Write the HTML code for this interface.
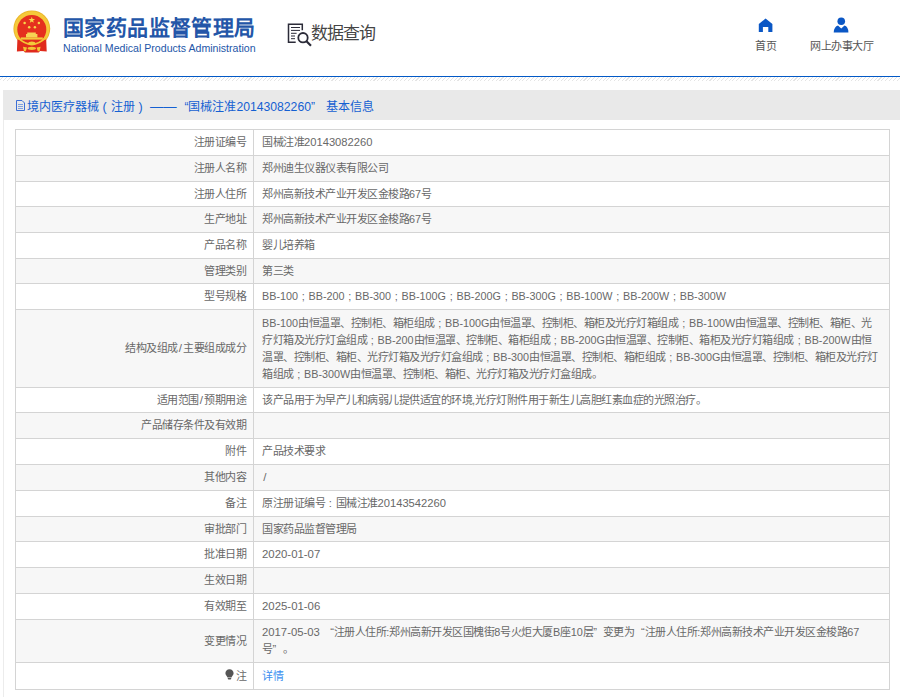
<!DOCTYPE html><html lang="zh-CN"><head><meta charset="utf-8"><title>NMPA</title><style>
*{margin:0;padding:0;box-sizing:border-box}
html,body{width:900px;height:697px;overflow:hidden;background:#fff}
body{position:relative;font-family:"Liberation Sans",sans-serif;color:#686868}
.a{position:absolute;white-space:nowrap}
.t{font-size:11px;letter-spacing:-0.5px;line-height:17.2px}
.L{letter-spacing:0}
.sc{display:inline-block;text-align:center;letter-spacing:0}
.q{letter-spacing:0}
</style></head><body>
<svg class="a" style="left:0;top:0" width="60" height="60" viewBox="0 0 60 60">
<circle cx="31.8" cy="28.8" r="18.4" fill="#eab52a"/>
<circle cx="31.8" cy="28.8" r="17.5" fill="#f5c93a"/>
<circle cx="31.8" cy="29.6" r="14.5" fill="#e5301e"/>
<path d="M27.2 32.4 H35.8 V34 H37.4 V37.5 H26 V34 H27.2Z" fill="#f6d454"/>
<path d="M20.8 37.4 H42.8 V39.6 H20.8Z" fill="#f3c93c"/>
<path d="M17.4 39.5 L16.9 51.5 L23.5 51 L25 52.4 L38.6 52.4 L40.1 51 L46.7 51.5 L46.2 39.5 Q31.8 42 17.4 39.5Z" fill="#e02a1c"/>
<path d="M17.2 37.2 Q31.8 51.5 46.4 37.2" fill="none" stroke="#f3c534" stroke-width="1.7"/>
<ellipse cx="31.8" cy="43.4" rx="3.6" ry="1.9" fill="#f3c93a"/>
<ellipse cx="31.8" cy="48.3" rx="4.2" ry="1.6" fill="#f3c534"/>
<path d="M23 46.8 L27 47.6 L25.8 51.2 L24 51.2Z M40.6 46.8 L36.6 47.6 L37.8 51.2 L39.6 51.2Z" fill="#f3c534"/>
<polygon points="31.8,16.8 32.6,19.1 35.1,19.1 33.1,20.5 33.8,22.8 31.8,21.4 29.8,22.8 30.5,20.5 28.5,19.1 31,19.1" fill="#f8d84a"/>
<circle cx="24.6" cy="23" r="1.25" fill="#f8d84a"/>
<circle cx="38.9" cy="23" r="1.25" fill="#f8d84a"/>
<circle cx="29.2" cy="27.2" r="1.25" fill="#f8d84a"/>
<circle cx="34.9" cy="27.2" r="1.25" fill="#f8d84a"/>
</svg>
<div class="a" style="left:63px;top:13.5px;font-size:21px;letter-spacing:0.4px;line-height:28px;font-weight:bold;color:#2356a8">国家药品监督管理局</div>
<div class="a" style="left:63px;top:40.7px;font-size:10.6px;line-height:14px;color:#2356a8">National Medical Products Administration</div>
<svg class="a" style="left:282px;top:16px" width="34" height="34" viewBox="0 0 34 34">
<g fill="none" stroke="#2b2b38" stroke-width="1.5">
<path d="M13.7 26.3 H6.5 V8.2 H20.3 V14.2"/>
<circle cx="21" cy="21.7" r="4.7" stroke-width="1.8"/>
<path d="M24.5 25.2 L29 29.7" stroke-width="2.2"/>
</g>
<g stroke="#2b2b38" stroke-width="1">
<path d="M9 11.5H18M9 14.4H18M9 17.3H14.6M9 20H13M9 22.7H13"/>
</g>
</svg>
<div class="a" style="left:310.5px;top:22.5px;font-size:17px;letter-spacing:-0.7px;line-height:22px;color:#454545">数据查询</div>
<svg class="a" style="left:750px;top:12px" width="40" height="24" viewBox="0 0 40 24">
<path d="M8.8 12 L15.6 6.6 L22.4 12 V19.9 H18.3 V15.1 H12.9 V19.9 H8.8 Z" fill="#0b57c5"/>
</svg>
<div class="a t" style="left:755px;top:37.5px;color:#555">首页</div>
<svg class="a" style="left:825px;top:12px" width="32" height="24" viewBox="0 0 32 24">
<circle cx="16.25" cy="9.3" r="3.8" fill="#0b57c5"/>
<path d="M8.7 20.5 Q9.2 14.4 13 13.6 L16.25 16.6 L19.5 13.6 Q23.2 14.4 23.4 20.5 Z" fill="#0b57c5"/>
</svg>
<div class="a t" style="left:810px;top:37.5px;color:#555">网上办事大厅</div>
<div class="a" style="left:0;top:76px;width:900px;height:1px;background:#0259c6"></div>
<div class="a" style="left:0;top:77px;width:900px;height:4px;background:repeating-linear-gradient(135deg,#fff 0,#fff 1.95px,#e4e4e4 1.95px,#e4e4e4 2.7px)"></div>
<div class="a" style="left:3px;top:90px;width:1px;height:607px;background:#ececec"></div>
<div class="a" style="left:3px;top:90px;width:897px;height:29.6px;background:#e9e9e9"></div>
<svg class="a" style="left:14px;top:99px" width="14" height="14" viewBox="0 0 14 14">
<path d="M2.5 1.5 H8 L10.5 4 V11.5 H2.5 Z" fill="none" stroke="#3d6fd6" stroke-width="1"/><path d="M4 5.5H9M4 7.5H9M4 9.5H9" stroke="#7fa0e0" stroke-width="1"/>
</svg>
<div class="a" style="left:26.5px;top:98px;font-size:12px;line-height:17px;color:#1460d2">境内医疗器械<span class="sc" style="width:12px;font-size:12.5px">(</span>注册<span class="sc" style="width:12px;font-size:12.5px">)</span><span class="L" style="font-size:13.35px;margin-left:3.5px">——</span><span class="q" style="display:inline-block;width:11.7px;text-align:right">“</span>国械注准<span class="L" style="font-size:12.2px">20143082260</span><span class="q" style="display:inline-block;width:15px;text-align:left">”</span>基本信息</div>
<div class="a" style="left:15px;top:129px;width:875px;height:26px;background:#fff"></div>
<div class="a" style="left:15px;top:129px;width:875px;height:1px;background:#d4d4d4"></div>
<div class="a t" style="right:653.8px;top:134.4px;text-align:right">注册证编号</div>
<div class="a t" style="left:262px;top:134.4px;color:#686868;letter-spacing:-0.5px">国械注准<span class="L" style="font-size:11.2px">20143082260</span></div>
<div class="a" style="left:15px;top:155px;width:875px;height:25.5px;background:#f7f7f7"></div>
<div class="a" style="left:15px;top:155px;width:875px;height:1px;background:#d4d4d4"></div>
<div class="a t" style="right:653.8px;top:160.15px;text-align:right">注册人名称</div>
<div class="a t" style="left:262px;top:160.15px;color:#686868;letter-spacing:-0.5px">郑州迪生仪器仪表有限公司</div>
<div class="a" style="left:15px;top:180.5px;width:875px;height:25.5px;background:#fff"></div>
<div class="a" style="left:15px;top:180.5px;width:875px;height:1px;background:#d4d4d4"></div>
<div class="a t" style="right:653.8px;top:185.65px;text-align:right">注册人住所</div>
<div class="a t" style="left:262px;top:185.65px;color:#686868;letter-spacing:-0.5px">郑州高新技术产业开发区金梭路<span class="L" style="font-size:10.8px">67</span>号</div>
<div class="a" style="left:15px;top:206px;width:875px;height:26px;background:#f7f7f7"></div>
<div class="a" style="left:15px;top:206px;width:875px;height:1px;background:#d4d4d4"></div>
<div class="a t" style="right:653.8px;top:211.4px;text-align:right">生产地址</div>
<div class="a t" style="left:262px;top:211.4px;color:#686868;letter-spacing:-0.5px">郑州高新技术产业开发区金梭路<span class="L" style="font-size:10.8px">67</span>号</div>
<div class="a" style="left:15px;top:232px;width:875px;height:26px;background:#fff"></div>
<div class="a" style="left:15px;top:232px;width:875px;height:1px;background:#d4d4d4"></div>
<div class="a t" style="right:653.8px;top:237.4px;text-align:right">产品名称</div>
<div class="a t" style="left:262px;top:237.4px;color:#686868;letter-spacing:-0.5px">婴儿培养箱</div>
<div class="a" style="left:15px;top:258px;width:875px;height:25px;background:#f7f7f7"></div>
<div class="a" style="left:15px;top:258px;width:875px;height:1px;background:#d4d4d4"></div>
<div class="a t" style="right:653.8px;top:262.9px;text-align:right">管理类别</div>
<div class="a t" style="left:262px;top:262.9px;color:#686868;letter-spacing:-0.5px">第三类</div>
<div class="a" style="left:15px;top:283px;width:875px;height:26px;background:#fff"></div>
<div class="a" style="left:15px;top:283px;width:875px;height:1px;background:#d4d4d4"></div>
<div class="a t" style="right:653.8px;top:288.4px;text-align:right">型号规格</div>
<div class="a t" style="left:262px;top:288.4px;color:#686868;letter-spacing:-0.5px"><span class="L" style="font-size:10.8px">BB-100</span><span class="sc" style="width:10.5px;font-size:10.8px">;</span><span class="L" style="font-size:10.8px">BB-200</span><span class="sc" style="width:10.5px;font-size:10.8px">;</span><span class="L" style="font-size:10.8px">BB-300</span><span class="sc" style="width:10.5px;font-size:10.8px">;</span><span class="L" style="font-size:10.8px">BB-100G</span><span class="sc" style="width:10.5px;font-size:10.8px">;</span><span class="L" style="font-size:10.8px">BB-200G</span><span class="sc" style="width:10.5px;font-size:10.8px">;</span><span class="L" style="font-size:10.8px">BB-300G</span><span class="sc" style="width:10.5px;font-size:10.8px">;</span><span class="L" style="font-size:10.8px">BB-100W</span><span class="sc" style="width:10.5px;font-size:10.8px">;</span><span class="L" style="font-size:10.8px">BB-200W</span><span class="sc" style="width:10.5px;font-size:10.8px">;</span><span class="L" style="font-size:10.8px">BB-300W</span></div>
<div class="a" style="left:15px;top:309px;width:875px;height:78px;background:#f7f7f7"></div>
<div class="a" style="left:15px;top:309px;width:875px;height:1px;background:#d4d4d4"></div>
<div class="a t" style="right:653.8px;top:340.4px;text-align:right">结构及组成<span class="L" style="font-size:10.8px"><span style="margin:0 1.2px;font-size:11.5px">/</span></span>主要组成成分</div>
<div class="a t" style="left:262px;top:314.6px;color:#686868;letter-spacing:-0.5px"><span class="L" style="font-size:10.8px">BB-100</span>由恒温罩、控制柜、箱柜组成<span class="sc" style="width:10.5px;font-size:10.8px">;</span><span class="L" style="font-size:10.8px">BB-100G</span>由恒温罩、控制柜、箱柜及光疗灯箱组成<span class="sc" style="width:10.5px;font-size:10.8px">;</span><span class="L" style="font-size:10.8px">BB-100W</span>由恒温罩、控制柜、箱柜、光</div>
<div class="a t" style="left:262px;top:331.8px;color:#686868;letter-spacing:-0.5px">疗灯箱及光疗灯盒组成<span class="sc" style="width:10.5px;font-size:10.8px">;</span><span class="L" style="font-size:10.8px">BB-200</span>由恒温罩、控制柜、箱柜组成<span class="sc" style="width:10.5px;font-size:10.8px">;</span><span class="L" style="font-size:10.8px">BB-200G</span>由恒温罩、控制柜、箱柜及光疗灯箱组成<span class="sc" style="width:10.5px;font-size:10.8px">;</span><span class="L" style="font-size:10.8px">BB-200W</span>由恒</div>
<div class="a t" style="left:262px;top:349.0px;color:#686868;letter-spacing:-0.5px">温罩、控制柜、箱柜、光疗灯箱及光疗灯盒组成<span class="sc" style="width:10.5px;font-size:10.8px">;</span><span class="L" style="font-size:10.8px">BB-300</span>由恒温罩、控制柜、箱柜组成<span class="sc" style="width:10.5px;font-size:10.8px">;</span><span class="L" style="font-size:10.8px">BB-300G</span>由恒温罩、控制柜、箱柜及光疗灯</div>
<div class="a t" style="left:262px;top:366.20000000000005px;color:#686868;letter-spacing:-0.5px">箱组成<span class="sc" style="width:10.5px;font-size:10.8px">;</span><span class="L" style="font-size:10.8px">BB-300W</span>由恒温罩、控制柜、箱柜、光疗灯箱及光疗灯盒组成。</div>
<div class="a" style="left:15px;top:387px;width:875px;height:25px;background:#fff"></div>
<div class="a" style="left:15px;top:387px;width:875px;height:1px;background:#d4d4d4"></div>
<div class="a t" style="right:653.8px;top:391.9px;text-align:right">适用范围<span class="L" style="font-size:10.8px"><span style="margin:0 1.2px;font-size:11.5px">/</span></span>预期用途</div>
<div class="a t" style="left:262px;top:391.9px;color:#686868;letter-spacing:-0.5px">该产品用于为早产儿和病弱儿提供适宜的环境<span class="L" style="font-size:10.8px">,</span>光疗灯附件用于新生儿高胆红素血症的光照治疗。</div>
<div class="a" style="left:15px;top:412px;width:875px;height:26px;background:#f7f7f7"></div>
<div class="a" style="left:15px;top:412px;width:875px;height:1px;background:#d4d4d4"></div>
<div class="a t" style="right:653.8px;top:417.4px;text-align:right">产品储存条件及有效期</div>
<div class="a t" style="left:262px;top:417.4px;color:#686868;letter-spacing:-0.5px"></div>
<div class="a" style="left:15px;top:438px;width:875px;height:26px;background:#fff"></div>
<div class="a" style="left:15px;top:438px;width:875px;height:1px;background:#d4d4d4"></div>
<div class="a t" style="right:653.8px;top:443.4px;text-align:right">附件</div>
<div class="a t" style="left:262px;top:443.4px;color:#686868;letter-spacing:-0.5px">产品技术要求</div>
<div class="a" style="left:15px;top:464px;width:875px;height:26px;background:#f7f7f7"></div>
<div class="a" style="left:15px;top:464px;width:875px;height:1px;background:#d4d4d4"></div>
<div class="a t" style="right:653.8px;top:469.4px;text-align:right">其他内容</div>
<div class="a t" style="left:262px;top:469.4px;color:#686868;letter-spacing:-0.5px"><span class="L" style="font-size:10.8px"><span style="margin:0 1.2px;font-size:11.5px">/</span></span></div>
<div class="a" style="left:15px;top:490px;width:875px;height:25.5px;background:#fff"></div>
<div class="a" style="left:15px;top:490px;width:875px;height:1px;background:#d4d4d4"></div>
<div class="a t" style="right:653.8px;top:495.15px;text-align:right">备注</div>
<div class="a t" style="left:262px;top:495.15px;color:#686868;letter-spacing:-0.5px">原注册证编号<span class="sc" style="width:10.5px;font-size:11.2px">:</span>国械注准<span class="L" style="font-size:11.2px">20143542260</span></div>
<div class="a" style="left:15px;top:515.5px;width:875px;height:25.5px;background:#f7f7f7"></div>
<div class="a" style="left:15px;top:515.5px;width:875px;height:1px;background:#d4d4d4"></div>
<div class="a t" style="right:653.8px;top:520.65px;text-align:right">审批部门</div>
<div class="a t" style="left:262px;top:520.65px;color:#686868;letter-spacing:-0.5px">国家药品监督管理局</div>
<div class="a" style="left:15px;top:541px;width:875px;height:26px;background:#fff"></div>
<div class="a" style="left:15px;top:541px;width:875px;height:1px;background:#d4d4d4"></div>
<div class="a t" style="right:653.8px;top:546.4px;text-align:right">批准日期</div>
<div class="a t" style="left:262px;top:546.4px;color:#686868;letter-spacing:-0.5px"><span class="L" style="font-size:11.4px">2020-01-07</span></div>
<div class="a" style="left:15px;top:567px;width:875px;height:26px;background:#f7f7f7"></div>
<div class="a" style="left:15px;top:567px;width:875px;height:1px;background:#d4d4d4"></div>
<div class="a t" style="right:653.8px;top:572.4px;text-align:right">生效日期</div>
<div class="a t" style="left:262px;top:572.4px;color:#686868;letter-spacing:-0.5px"></div>
<div class="a" style="left:15px;top:593px;width:875px;height:25.5px;background:#fff"></div>
<div class="a" style="left:15px;top:593px;width:875px;height:1px;background:#d4d4d4"></div>
<div class="a t" style="right:653.8px;top:598.15px;text-align:right">有效期至</div>
<div class="a t" style="left:262px;top:598.15px;color:#686868;letter-spacing:-0.5px"><span class="L" style="font-size:11.4px">2025-01-06</span></div>
<div class="a" style="left:15px;top:618.5px;width:875px;height:43.5px;background:#f7f7f7"></div>
<div class="a" style="left:15px;top:618.5px;width:875px;height:1px;background:#d4d4d4"></div>
<div class="a t" style="right:653.8px;top:632.65px;text-align:right">变更情况</div>
<div class="a t" style="left:262px;top:624.05px;color:#686868;letter-spacing:-0.5px"><span class="L" style="font-size:11.3px">2017-05-03</span><span class="q" style="display:inline-block;width:14px;text-align:right;font-size:11px">“</span>注册人住所<span class="L" style="font-size:10.9px">:</span>郑州高新开发区国槐街<span class="L" style="font-size:10.9px">8</span>号火炬大厦<span class="L" style="font-size:10.9px">B</span>座<span class="L" style="font-size:10.9px">10</span>层<span class="q" style="display:inline-block;width:9.5px;text-align:left;font-size:11px">”</span>变更为<span class="q" style="display:inline-block;width:10.5px;text-align:right;font-size:11px">“</span>注册人住所<span class="L" style="font-size:10.9px">:</span>郑州高新技术产业开发区金梭路<span class="L" style="font-size:10.9px">67</span></div>
<div class="a t" style="left:262px;top:641.25px;color:#686868;letter-spacing:-0.5px">号<span class="q" style="display:inline-block;width:10.5px;text-align:left;font-size:11px">”</span>。</div>
<div class="a" style="left:15px;top:662px;width:875px;height:26.5px;background:#fff"></div>
<div class="a" style="left:15px;top:662px;width:875px;height:1px;background:#d4d4d4"></div>
<div class="a t" style="right:653.8px;top:667.65px;text-align:right"><svg width="9" height="11" viewBox="0 0 9 11" style="vertical-align:0px;margin-right:1.5px"><path d="M4.5 0.3 C7 0.3 8.6 2 8.6 4.3 C8.6 6.3 6.9 7.2 6.5 8.4 H2.5 C2.1 7.2 0.4 6.3 0.4 4.3 C0.4 2 2 0.3 4.5 0.3Z M2.8 9.1 H6.2 V9.9 L5.5 10.6 H3.5 L2.8 9.9Z" fill="#555"/></svg>注</div>
<div class="a t" style="left:262px;top:667.65px;color:#3b8ff0;letter-spacing:-0.5px">详情</div>
<div class="a" style="left:15px;top:688.5px;width:875px;height:1px;background:#d4d4d4"></div>
<div class="a" style="left:15px;top:129px;width:1px;height:560px;background:#d4d4d4"></div>
<div class="a" style="left:253px;top:129px;width:1px;height:560px;background:#d4d4d4"></div>
<div class="a" style="left:889px;top:129px;width:1px;height:560px;background:#d4d4d4"></div>
</body></html>
